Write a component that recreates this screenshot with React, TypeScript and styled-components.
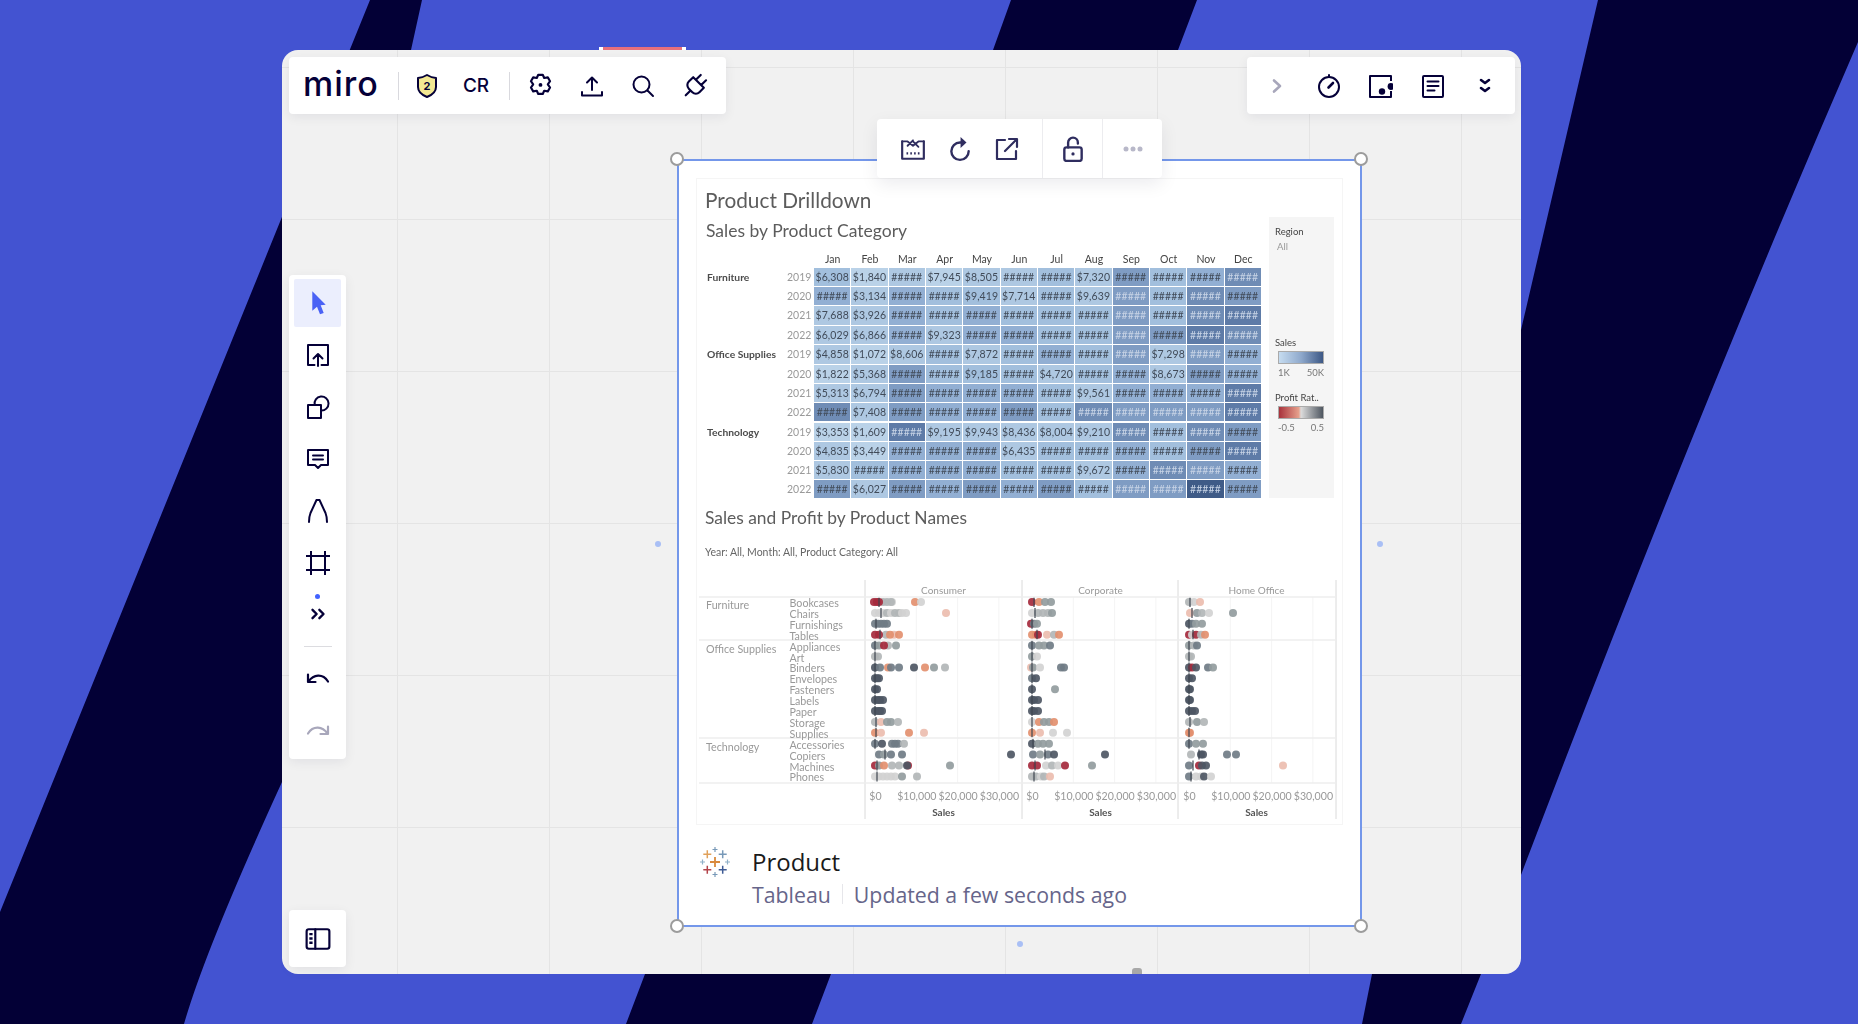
import React from 'react'
import styled, { createGlobalStyle } from 'styled-components'

const NAVY = '#050038'

const GlobalStyle = createGlobalStyle`
  html, body {
    margin: 0;
    padding: 0;
    overflow: hidden;
    background: #4353d1;
  }
  * { box-sizing: border-box; }
`

const Stage = styled.div`
  position: relative;
  width: 1858px;
  height: 1024px;
  padding: 50px 337px 50px 282px;
  background: #4353d1;
  overflow: hidden;
`

const Stripes = styled.svg`
  position: absolute;
  inset: 0;
  width: 1858px;
  height: 1024px;
`

const AppWindow = styled.div`
  position: relative;
  width: 1239px;
  height: 924px;
  border-radius: 16px;
  background-color: #f1f1f1;
  background-image: linear-gradient(#e4e4e4 1px, transparent 1px), linear-gradient(90deg, #e4e4e4 1px, transparent 1px);
  background-size: 152px 152px;
  background-position: 115px 17px;
`

const PinkTab = styled.div`
  position: absolute;
  left: 317px;
  top: -3px;
  width: 87px;
  height: 3px;
  padding: 0 4px;
  background: #fff;
  &::after {
    content: '';
    display: block;
    height: 3px;
    background: #e8707c;
  }
`

const Panel = styled.div`
  position: absolute;
  background: #fff;
  border-radius: 4px;
  box-shadow: 0 3px 12px rgba(5, 0, 56, 0.07);
  display: flex;
`

const TopLeftBar = styled(Panel)`
  left: 7px;
  top: 7px;
  width: 437px;
  height: 57px;
  align-items: center;
`

const TopRightBar = styled(Panel)`
  right: 6px;
  top: 7px;
  width: 268px;
  height: 57px;
  align-items: center;
  padding: 0 4px;
`

const SideBar = styled(Panel)`
  left: 7px;
  top: 225px;
  width: 57px;
  height: 484px;
  flex-direction: column;
  align-items: center;
  padding: 2px 0;
`

const BoardsBar = styled(Panel)`
  left: 7px;
  top: 860px;
  width: 57px;
  height: 57px;
  align-items: center;
  justify-content: center;
`

const FloatBar = styled(Panel)`
  left: 595px;
  top: 69px;
  width: 285px;
  height: 59px;
  align-items: stretch;
  padding-left: 12px;
  z-index: 3;
  box-shadow: 0 6px 18px rgba(5, 0, 56, 0.08);
`

const Logo = styled.div`
  width: 109px;
  padding-left: 14px;
  font-family: Inter, sans-serif;
  font-size: 34px;
  font-weight: 500;
  letter-spacing: 1px;
  color: ${NAVY};
  line-height: 40px;
  height: 40px;
  margin-top: -4px;
`

const Divider = styled.div`
  width: 1px;
  height: 28px;
  background: #d9d9de;
`

const Slot = styled.div<{ $w?: number; $h?: number; $ml?: number }>`
  width: ${({ $w }) => ($w ? `${$w}px` : '52px')};
  height: ${({ $h }) => ($h ? `${$h}px` : '100%')};
  margin-left: ${({ $ml }) => $ml ?? 0}px;
  display: flex;
  align-items: center;
  justify-content: center;
  flex-shrink: 0;
`

const Initials = styled.span`
  font-family: Inter, sans-serif;
  font-size: 19px;
  font-weight: 500;
  color: ${NAVY};
`

const ToolSlot = styled.div<{ $active?: boolean }>`
  width: 47px;
  height: 52px;
  display: flex;
  align-items: center;
  justify-content: center;
  position: relative;
  flex-shrink: 0;
  &::before {
    content: '';
    display: ${({ $active }) => ($active ? 'block' : 'none')};
    position: absolute;
    inset: 2px 0;
    background: #ebeefd;
    border-radius: 2px;
  }
  & > svg { position: relative; }
`

const MoreSlot = styled(ToolSlot)`
  height: 50px;
  &::after {
    content: '';
    position: absolute;
    left: 21px;
    top: 5px;
    width: 5px;
    height: 5px;
    border-radius: 50%;
    background: #4262ff;
  }
`

const ToolDivider = styled.div`
  width: 28px;
  height: 1px;
  margin: 7px 0 6px;
  background: #dcdce0;
`

const FloatDivider = styled.div`
  width: 1px;
  margin-left: 12px;
  background: #ececef;
`

const FloatDividerTight = styled(FloatDivider)`
  margin-left: 0;
`

const Card = styled.div`
  position: absolute;
  left: 394.5px;
  top: 108.5px;
  width: 685px;
  height: 768px;
  padding: 17.5px 0 0 17.5px;
  background: #fff;
  border: 2px solid #7497ea;
`

const Handle = styled.div<{ $right?: boolean; $bottom?: boolean }>`
  position: absolute;
  width: 14px;
  height: 14px;
  border-radius: 50%;
  background: #fff;
  border: 2px solid #9c9c9c;
  ${({ $right }) => ($right ? 'right: -8.5px;' : 'left: -9px;')}
  ${({ $bottom }) => ($bottom ? 'bottom: -8.5px;' : 'top: -9px;')}
`

const ConnectorDot = styled.div<{ $side: 'left' | 'right' | 'bottom' }>`
  position: absolute;
  width: 6px;
  height: 6px;
  border-radius: 50%;
  background: #a9bff5;
  ${({ $side }) =>
    $side === 'left'
      ? 'left: -24px; top: 380px;'
      : $side === 'right'
        ? 'right: -23px; top: 380px;'
        : 'left: 338px; bottom: -22px;'}
`

const ScrollNub = styled.div`
  position: absolute;
  left: 850px;
  bottom: 0;
  width: 10px;
  height: 6px;
  border-radius: 3px 3px 0 0;
  background: #a8a8a8;
`

const Dashboard = styled.div`
  width: 647px;
  height: 647px;
  font-family: Lato, sans-serif;
  box-shadow: inset 0 0 0 1px #f5f5f5;
  filter: blur(0.3px);
`

const DashTitle = styled.div`
  height: 39px;
  padding: 9px 0 0 9px;
  font-size: 20.8px;
  line-height: 26px;
  color: #5c5c5c;
`

const HeatSection = styled.div`
  display: flex;
  height: 281px;
  padding-left: 10px;
`

const HeatColumn = styled.div`
  width: 556px;
`

const HeatTitle = styled.div`
  height: 28px;
  font-size: 17.5px;
  line-height: 28px;
  color: #5c5c5c;
`

const MonthRow = styled.div`
  height: 23px;
  padding: 6px 0 0 108px;
  display: grid;
  grid-template-columns: repeat(12, 37.33px);
`

const Month = styled.div`
  text-align: center;
  font-size: 10.5px;
  line-height: 16px;
  color: #444;
`

const HeatGroup = styled.div`
  margin-bottom: 1.6px;
`

const HeatRow = styled.div`
  display: flex;
  height: 18.2px;
  margin-bottom: 1px;
`

const CategoryLabel = styled.div`
  width: 81px;
  padding-left: 1px;
  font-size: 10.3px;
  font-weight: 700;
  line-height: 18px;
  color: #4c4c4c;
  white-space: nowrap;
`

const YearLabel = styled.div`
  width: 27px;
  font-size: 10.5px;
  line-height: 18px;
  color: #999;
`

const CellGrid = styled.div`
  display: grid;
  grid-template-columns: repeat(12, 36.33px);
  gap: 1px;
`

const HEAT = ['#bad2e8', '#aec8e2', '#a2bfdd', '#92afd3', '#7f9cc3', '#6f8cb5', '#5e7ba7', '#3f5b87']

const Cell = styled.div<{ $level: number; $light?: boolean }>`
  background: ${({ $level }) => HEAT[$level]};
  color: ${({ $light }) => ($light ? '#c8d4e6' : '#414b59')};
  font-size: 10.5px;
  line-height: 18px;
  text-align: center;
  letter-spacing: 0.1px;
`

const Legend = styled.div`
  width: 65px;
  height: 281px;
  margin-left: 7px;
  padding: 9px 0 0 6px;
  background: #f5f5f5;
  font-size: 9.5px;
  line-height: 12px;
`

const LegendHead = styled.div<{ $mt?: number }>`
  margin-top: ${({ $mt }) => $mt ?? 0}px;
  color: #444;
  white-space: nowrap;
`

const LegendAll = styled.div`
  margin: 3px 0 0 2px;
  color: #999;
`

const LegendBar = styled.div<{ $colors: string }>`
  width: 46px;
  height: 13px;
  margin: 2px 0 0 3px;
  border: 1px solid #aaa;
  background: linear-gradient(90deg, ${({ $colors }) => $colors});
`

const LegendScale = styled.div`
  display: flex;
  justify-content: space-between;
  width: 46px;
  margin: 3px 0 0 3px;
  color: #777;
`

const SectionTitle = styled.div`
  height: 40px;
  padding-left: 9px;
  font-size: 17.4px;
  line-height: 40px;
  color: #5c5c5c;
`

const FilterLine = styled.div`
  height: 28px;
  padding-left: 9px;
  font-size: 10.5px;
  line-height: 28px;
  color: #666;
`

const ScatterSvg = styled.svg`
  display: block;
  margin-top: 9px;
  width: 646px;
  height: 250px;
  font-family: Lato, sans-serif;
`

const CardFooter = styled.div`
  display: flex;
  margin-top: 19px;
  font-family: 'Open Sans', sans-serif;
`

const TableauMark = styled.svg`
  width: 36px;
  height: 36px;
  margin-left: 1px;
  flex-shrink: 0;
`

const FooterText = styled.div`
  margin-left: 19px;
  padding-top: 3px;
`

const CardName = styled.div`
  font-size: 24px;
  line-height: 30px;
  color: #1a1a1a;
`

const CardMeta = styled.div`
  display: flex;
  align-items: center;
  height: 30px;
  margin-top: 2px;
  font-size: 21.3px;
  color: #66658a;
`

const MetaDivider = styled.div`
  width: 1px;
  height: 20px;
  margin: 0 11px;
  background: #e6e6ea;
`

type IconProps = { size?: number; color?: string; width?: number; children: React.ReactNode }

const Icon = ({ size = 24, color = NAVY, width = 2, children }: IconProps) => (
  <svg
    width={size}
    height={size}
    viewBox="0 0 24 24"
    fill="none"
    stroke={color}
    strokeWidth={width}
    strokeLinecap="round"
    strokeLinejoin="round"
  >
    {children}
  </svg>
)

const FLOAT = '#2f2d5f'

// heat levels per row, Jan..Dec
const HEAT_ROWS = [
  ['Furniture', '2019', '$6,308 $1,840 # $7,945 $8,505 # # $7,320 # # # #', '201011214235', [11]],
  ['', '2020', '# $3,134 # # $9,419 $7,714 # $9,639 # # # #', '313221214254', [8, 10]],
  ['', '2021', '$7,688 $3,926 # # # # # # # # # #', '113232224256', [8, 10, 11]],
  ['', '2022', '$6,029 $6,866 # $9,323 # # # # # # # #', '113133224465', [8, 10, 11]],
  ['Office Supplies', '2019', '$4,858 $1,072 $8,606 # $7,872 # # # # $7,298 # #', '101212324143', [8, 10]],
  ['', '2020', '$1,822 $5,368 # # $9,185 # $4,720 # # $8,673 # #', '014222123143', []],
  ['', '2021', '$5,313 $6,794 # # # # # $9,561 # # # #', '114333213336', [11]],
  ['', '2022', '# $7,408 # # # # # # # # # #', '514334254446', [7, 8, 9, 10, 11]],
  ['Technology', '2019', '$3,353 $1,609 # $9,195 $9,943 $8,436 $8,004 $9,210 # # # #', '006111115254', [2, 8, 10]],
  ['', '2020', '$4,835 $3,449 # # # $6,435 # # # # # #', '103331223246', [11]],
  ['', '2021', '$5,830 # # # # # # $9,672 # # # #', '123332213543', [9, 10]],
  ['', '2022', '# $6,027 # # # # # # # # # #', '414343424474', [8, 9, 10]],
] as const

const MONTHS = ['Jan', 'Feb', 'Mar', 'Apr', 'May', 'Jun', 'Jul', 'Aug', 'Sep', 'Oct', 'Nov', 'Dec']

const DOT: Record<string, string> = {
  r: '#a52a3d',
  o: '#e3906f',
  p: '#ecbdaf',
  l: '#d2d2d2',
  g: '#b2b6b7',
  m: '#929c9e',
  d: '#707c86',
  k: '#4e5764',
}

const SUBCATEGORIES = [
  'Bookcases', 'Chairs', 'Furnishings', 'Tables', 'Appliances', 'Art', 'Binders', 'Envelopes', 'Fasteners',
  'Labels', 'Paper', 'Storage', 'Supplies', 'Accessories', 'Copiers', 'Machines', 'Phones',
]

// "<colour><px from $0>" per row, after | the reference line
const PANES = [
  {
    name: 'Consumer',
    left: 866,
    zero: 876,
    rows: [
      'l17 g16 g12 g8 r-1 r2 r4 o40 l46|4', 'l0 l4 l8 g12 l16 g20 g24 l27 l31 p71|6', 'd0 d3 d6 d9 d12|1',
      'g11 r0 r4 p19 o15 o24|5', 'g13 d0 m4 r9 m21|0', 'g0 g3|0', 'k0 d5 o13 d16 d24 k39 o50 m59 g70|0',
      'k0 k2 k4|0', 'k0 k2|0', 'k0 k3 k5 k8|0', 'k0 k3 k5 k7|0', 'g0 p6 m12 m16 g23|1', 'o0 p6 o34 p49|1',
      'd0 k7 d17 d20 d23 g29|0', 'd4 m9 d16 d27 k136|10', 'r0 m4 g17 g24 o9 r33 k32 m75|2',
      'l0 l4 l8 l12 l16 l20 m27 g42|2',
    ],
  },
  {
    name: 'Corporate',
    left: 1023,
    zero: 1033,
    rows: [
      'r0 o7 m13 m19|2', 'l0 g6 g11 g16 m20|3', 'r-1 d2 m5|0', 'o0 o4 r6 p15 g22 o27|5', 'd0 m7 m12 d18|0',
      'm0 l5|0', 'p-1 m1 l8 d29 d32|0', 'd0 k4|0', 'k0 m23|0', 'k0 k2 k6|0', 'k0 k2 k6|0', 'l0 o7 m12 m17 o22|0',
      'o0 p8 l21 l35|0', 'k0 m6 m11 m17|1', 'd1 m8 d16 k22 k73|13', 'r0 r5 l14 g20 l26 r33 m60|3',
      'g0 g4 l9 g12 p18|2',
    ],
  },
  {
    name: 'Home Office',
    left: 1179,
    zero: 1190,
    rows: [
      'g0 l5 p11|1', 'p1 m8 g13 l20 m44|3', 'k0 d3 m7 m13|0', 'r0 l3 r7 g12 o16|4', 'm0 g5 d8|0', 'g0 g2|0',
      'k0 r3 k7 d19 m24|0', 'k0 k3|0', 'k0 k1|0', 'k0 k1|0', 'k0 k3 k6|0', 'g0 m8 g15|1', 'o0 o1|0',
      'd0 m7 m14|0', 'g2 k12 k14 d38 d47|10', 'd0 r10 k13 k17 p94|4', 'd0 l7 l12 k15 l22|2',
    ],
  },
]

const ScatterChart = () => (
  <ScatterSvg viewBox="697 575 646 250">
    {PANES.map((pane) => (
      <g key={pane.name}>
        {[0, 41.3, 82.6, 123.9].map((dx) => (
          <line key={dx} x1={pane.zero + dx} x2={pane.zero + dx} y1={597} y2={783} stroke="#f4f4f4" />
        ))}
        <text x={pane.left + 78.500} y={593.500} textAnchor="middle" fontSize={10} fill="#999">
          {pane.name}
        </text>
        {pane.rows.map((row, i) => {
          const [dots, ref] = row.split('|')
          const y = 602 + i * 10.9
          return (
            <g key={i}>
              {dots.split(' ').map((d, j) => (
                <circle key={j} cx={pane.zero + Number(d.slice(1))} cy={y} r={4} fill={DOT[d[0]]} opacity={0.92} />
              ))}
              <line
                x1={pane.zero + Number(ref)}
                x2={pane.zero + Number(ref)}
                y1={y - 5}
                y2={y + 5}
                stroke="#3f4650"
                strokeWidth={1.2}
              />
            </g>
          )
        })}
        {['$0', '$10,000', '$20,000', '$30,000'].map((label, i) => (
          <text key={label} x={pane.zero + 0.500 + i * 41.3} y={799.500} textAnchor="middle" fontSize={10.6} fill="#999">
            {label}
          </text>
        ))}
        <text x={pane.left + 78.500} y={815.500} textAnchor="middle" fontSize={10} fontWeight={700} fill="#555">
          Sales
        </text>
      </g>
    ))}
    {[866, 1023, 1179, 1337].map((x) => (
      <line key={x} x1={x} x2={x} y1={580} y2={819} stroke="#dadada" />
    ))}
    {[597, 640, 738, 783].map((y) => (
      <line key={y} x1={700} x2={1337} y1={y} y2={y} stroke="#eeeeee" strokeWidth={1.4} />
    ))}
    {[
      ['Furniture', 609],
      ['Office Supplies', 653],
      ['Technology', 751],
    ].map(([label, y]) => (
      <text key={label} x={707} y={y} fontSize={10.7} fill="#999">
        {label}
      </text>
    ))}
    {SUBCATEGORIES.map((label, i) => (
      <text key={label} x={790.500} y={607 + i * 10.9} fontSize={10.7} fill="#999">
        {label}
      </text>
    ))}
  </ScatterSvg>
)

const Plus = ({ x, y, s, w, c }: { x: number; y: number; s: number; w: number; c: string }) => (
  <path d={`M${x - s / 2} ${y}h${s}M${x} ${y - s / 2}v${s}`} stroke={c} strokeWidth={w} fill="none" />
)

const TableauLogo = () => (
  <TableauMark viewBox="0 0 36 36">
    <Plus x={18} y={18} s={10} w={1.8} c="#d98a3e" />
    <Plus x={10.3} y={10.3} s={8} w={1.5} c="#e0a15a" />
    <Plus x={25.7} y={10.3} s={8} w={1.5} c="#7899b8" />
    <Plus x={10.3} y={25.7} s={8} w={1.5} c="#b3434a" />
    <Plus x={25.7} y={25.7} s={8} w={1.5} c="#3e5b94" />
    <Plus x={18} y={5.500} s={5} w={1.2} c="#7899b8" />
    <Plus x={18} y={30.500} s={5} w={1.2} c="#7899b8" />
    <Plus x={5.500} y={18} s={5} w={1.2} c="#8fb0c8" />
    <Plus x={30.500} y={18} s={5} w={1.2} c="#8fb0c8" />
  </TableauMark>
)

export default function App() {
  return (
    <Stage>
      <GlobalStyle />
      <Stripes viewBox="0 0 1858 1024">
        <path fill="#030036" d="M370 0H422L411 50L400 300L282 782Q205 950 184 1024H0V912Z" />
        <path fill="#030036" d="M1011 0H1197L1178 50L831 974L812 1024H626L645 974L993 50Z" />
        <path fill="#030036" d="M1598 0H1858V42Q1690 430 1521 875L1481 974L1461 1024H1362L1372 974L1521 330Z" />
      </Stripes>

      <AppWindow>
        <PinkTab />

        <TopLeftBar>
          <Logo>miro</Logo>
          <Divider />
          <Slot $w={56}>
            <svg width="24" height="26" viewBox="0 0 24 26">
              <path
                d="M12 2c3 1.800 5.500 2.600 9 3v9c0 4.500-4 8-9 10-5-2-9-5.500-9-10V5c3.500-.4 6-1.200 9-3z"
                fill="#f3e893"
                stroke={NAVY}
                strokeWidth="2"
                strokeLinejoin="round"
              />
              <text x="12" y="17" textAnchor="middle" fontSize="11" fontWeight="700" fontFamily="Inter, sans-serif" fill={NAVY}>
                2
              </text>
            </svg>
          </Slot>
          <Slot $w={42}>
            <Initials>CR</Initials>
          </Slot>
          <Slot $w={12} />
          <Divider />
          <Slot $ml={4}>
            <Icon size={27} width={1.9}>
              <path d="M10 2.500h4l1.300 2.800 3.200-.5 2 3.400-2 2.800 2 2.800-2 3.400-3.200-.5-1.300 2.800h-4l-1.300-2.800-3.200.5-2-3.400 2-2.800-2-2.800 2-3.400 3.200.5z" />
              <circle cx="12" cy="11.500" r="1.700" fill={NAVY} stroke="none" />
            </Icon>
          </Slot>
          <Slot>
            <Icon>
              <path d="M12 16V3.500M7 8.500l5-5 5 5M2 18v3.500h20V18" />
            </Icon>
          </Slot>
          <Slot $ml={-1}>
            <Icon>
              <circle cx="10.500" cy="10.500" r="8" />
              <path d="M16.500 16.500L22 22" />
            </Icon>
          </Slot>
          <Slot>
            <Icon size={30} width={1.7}>
              <g transform="rotate(45 12 12)">
                <path d="M12 22.500v-5.500M9 8V2.500M15 8V2.500M18 8v5a4 4 0 0 1-4 4h-4a4 4 0 0 1-4-4V8Z" />
              </g>
            </Icon>
          </Slot>
        </TopLeftBar>

        <TopRightBar>
          <Slot>
            <Icon color="#a8a7bb" width={2.6}>
              <path d="M9 6.500l6 5.500-6 5.500" />
            </Icon>
          </Slot>
          <Slot>
            <Icon>
              <circle cx="12" cy="13" r="10" />
              <path d="M12 1v2" />
              <path d="M11.500 13.500L16 9" strokeWidth="2.600" />
            </Icon>
          </Slot>
          <Slot>
            <Icon>
              <path d="M22 7V2H1v21h21v-6" strokeLinecap="butt" />
              <circle cx="13" cy="17.500" r="3.200" fill={NAVY} stroke="none" />
              <circle cx="22" cy="12.500" r="3.400" fill={NAVY} stroke="none" />
            </Icon>
          </Slot>
          <Slot>
            <Icon>
              <rect x="2" y="2" width="20" height="21" rx="1" />
              <path d="M6.500 7.500h11M6.500 12h11M6.500 16.500h7" />
            </Icon>
          </Slot>
          <Slot>
            <Icon width={2.6}>
              <path d="M8 6l4 3 4-3M8 14l4 3 4-3" />
            </Icon>
          </Slot>
        </TopRightBar>

        <SideBar>
          <ToolSlot $active>
            <svg width="24" height="24" viewBox="0 0 24 24">
              <path d="M6.300.3L19.700 13.700l-5 .6 3 7.700-3.700 1.300-3-7.600-4.700 4z" fill="#4a62f5" />
            </svg>
          </ToolSlot>
          <ToolSlot>
            <Icon>
              <path d="M8.500 22H2V2h20v20h-6.500M12 23V11M7.500 15.500L12 11l4.500 4.500" />
            </Icon>
          </ToolSlot>
          <ToolSlot>
            <Icon>
              <rect x="2" y="10" width="13" height="13" />
              <path d="M8.700 10A7 7 0 1 1 15 15.500" />
            </Icon>
          </ToolSlot>
          <ToolSlot>
            <Icon>
              <path d="M2 3h20v15h-7l-3 3-3-3H2z" />
              <path d="M7 8.500h10M7 12.500h10" />
            </Icon>
          </ToolSlot>
          <ToolSlot>
            <Icon>
              <path d="M10.500 1h3M10.500 1L4.500 14c-1 2.500-1.500 4-1.500 9M13.500 1l6 13c1 2.500 1.500 4 1.500 9" />
            </Icon>
          </ToolSlot>
          <ToolSlot>
            <Icon>
              <path d="M0 5h24M0 19h24M5 0v24M19 0v24" />
            </Icon>
          </ToolSlot>
          <MoreSlot>
            <Icon width={2.6} size={22}>
              <path d="M6 7.500l4.500 4.500L6 16.500M13.500 7.500L18 12l-4.500 4.500" />
            </Icon>
          </MoreSlot>
          <ToolDivider />
          <ToolSlot>
            <Icon width={2.2}>
              <path d="M2 7.500V15h7.500" />
              <path d="M2.500 14.500C7.500 7.500 16.500 6 22 14.500" />
            </Icon>
          </ToolSlot>
          <ToolSlot>
            <Icon color="#a8a7bb" width={2.2}>
              <path d="M22 7.500V15h-7.500" />
              <path d="M21.500 14.500C16.500 7.500 7.500 6 2 14.500" />
            </Icon>
          </ToolSlot>
        </SideBar>

        <BoardsBar>
          <Icon size={26} width={2}>
            <rect x="1.500" y="3" width="21" height="18" rx="2" />
            <path d="M9.500 3v18" />
            <path d="M4 7.500h3M4 11.500h3M4 15.500h3" strokeWidth="2.200" strokeLinecap="butt" />
          </Icon>
        </BoardsBar>

        <FloatBar>
          <Slot $w={47}>
            <Icon color={FLOAT} size={26}>
              <path d="M2 5v16h20V5" />
              <path d="M2 5h5l5 4 5-4h5M7 9l5-5M12 5l5 5" strokeWidth="1.700" />
              <path d="M6 16h12" strokeDasharray="1.500 2" strokeLinecap="butt" />
            </Icon>
          </Slot>
          <Slot $w={47}>
            <Icon color={FLOAT} size={26} width={2.2}>
              <path d="M20 14a8 8 0 1 1-8-8h2" />
              <path d="M12.500 1l5.500 5-5.500 5z" fill={FLOAT} stroke="none" />
            </Icon>
          </Slot>
          <Slot $w={47}>
            <Icon color={FLOAT} size={24} width={2.2}>
              <path d="M10 3H2v19h19v-8" />
              <path d="M10 14L21 3M14 2h8v8" />
            </Icon>
          </Slot>
          <FloatDivider />
          <Slot $w={59}>
            <Icon color={FLOAT} size={26} width={2.2}>
              <rect x="4" y="10.500" width="16" height="12.500" rx="2" />
              <path d="M7.500 10.500V6a4.500 4.500 0 0 1 9 0v1" />
              <circle cx="12" cy="16.500" r="1.500" fill={FLOAT} stroke="none" />
            </Icon>
          </Slot>
          <FloatDividerTight />
          <Slot $w={59}>
            <svg width="20" height="6" viewBox="0 0 20 6">
              <circle cx="3" cy="3" r="2.500" fill="#b8b8c9" />
              <circle cx="10" cy="3" r="2.500" fill="#b8b8c9" />
              <circle cx="17" cy="3" r="2.500" fill="#b8b8c9" />
            </svg>
          </Slot>
        </FloatBar>

        <Card>
          <Handle />
          <Handle $right />
          <Handle $bottom />
          <Handle $right $bottom />
          <ConnectorDot $side="left" />
          <ConnectorDot $side="right" />
          <ConnectorDot $side="bottom" />

          <Dashboard>
            <DashTitle>Product Drilldown</DashTitle>
            <HeatSection>
              <HeatColumn>
                <HeatTitle>Sales by Product Category</HeatTitle>
                <MonthRow>
                  {MONTHS.map((m) => (
                    <Month key={m}>{m}</Month>
                  ))}
                </MonthRow>
                {[0, 4, 8].map((start) => (
                  <HeatGroup key={start}>
                    {HEAT_ROWS.slice(start, start + 4).map(([category, year, values, levels, light]) => (
                      <HeatRow key={year}>
                        <CategoryLabel>{category}</CategoryLabel>
                        <YearLabel>{year}</YearLabel>
                        <CellGrid>
                          {values.split(' ').map((v, i) => (
                            <Cell key={i} $level={Number(levels[i])} $light={(light as readonly number[]).includes(i)}>
                              {v === '#' ? '#####' : v}
                            </Cell>
                          ))}
                        </CellGrid>
                      </HeatRow>
                    ))}
                  </HeatGroup>
                ))}
              </HeatColumn>
              <Legend>
                <LegendHead>Region</LegendHead>
                <LegendAll>All</LegendAll>
                <LegendHead $mt={84}>Sales</LegendHead>
                <LegendBar $colors="#c6dcf0, #8fa9cc, #3d5885" />
                <LegendScale>
                  <span>1K</span>
                  <span>50K</span>
                </LegendScale>
                <LegendHead $mt={13}>Profit Rat..</LegendHead>
                <LegendBar $colors="#a8323c, #e6a08c 45%, #dcdcdc 50%, #4e5660" />
                <LegendScale>
                  <span>-0.5</span>
                  <span>0.5</span>
                </LegendScale>
              </Legend>
            </HeatSection>
            <SectionTitle>Sales and Profit by Product Names</SectionTitle>
            <FilterLine>Year: All, Month: All, Product Category: All</FilterLine>
            <ScatterChart />
          </Dashboard>

          <CardFooter>
            <TableauLogo />
            <FooterText>
              <CardName>Product</CardName>
              <CardMeta>
                Tableau
                <MetaDivider />
                Updated a few seconds ago
              </CardMeta>
            </FooterText>
          </CardFooter>
        </Card>

        <ScrollNub />
      </AppWindow>
    </Stage>
  )
}
